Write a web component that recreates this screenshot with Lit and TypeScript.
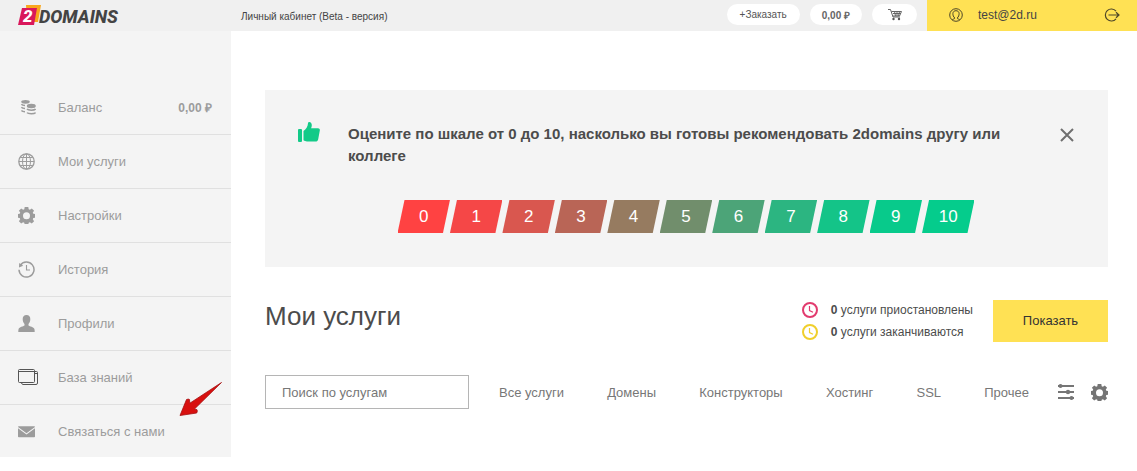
import { LitElement, html, css, svg } from "lit";
import { customElement } from "lit/decorators.js";

const gear = svg`<path fill-rule="evenodd" fill="currentColor" d="M6.700 0h3.600l.4 2.200 1.200.5 1.900-1.300 2.300 2.300-1.300 1.900.5 1.200 2 .3v3.600l-2 .4-.5 1.200 1.300 1.900-2.300 2.300-1.900-1.300-1.200.5-.4 2H6.700l-.4-2-1.200-.5-1.900 1.300-2.300-2.300 1.300-1.900-.5-1.200L0 10.700V7.100l1.700-.3.5-1.200L.9 3.700 3.200 1.400l1.900 1.300 1.200-.5zM8.500 5.200a3.500 3.500 0 1 0 0 7a3.500 3.500 0 1 0 0-7z"/>`;

const icons: Record<string, unknown> = {
  coins: svg`<g fill="currentColor"><ellipse cx="7.500" cy="2.800" rx="4.300" ry="1.900"/><ellipse cx="13.300" cy="7" rx="4.500" ry="2.200"/></g>
    <g fill="none" stroke="currentColor" stroke-width="1.500"><path d="M3.400 5.200c.8 1 2.200 1.200 3.600 1.200M3.400 8.200c.8 1 2.200 1.200 3.600 1.200M3.400 11.500c.8 1 2.200 1.200 3.600 1.200M9 10c1 1.500 7.600 1.500 8.600 0M9 13.600c1 1.500 7.600 1.500 8.600 0"/></g>`,
  globe: svg`<g fill="none" stroke="currentColor"><circle cx="8.500" cy="8.500" r="7.700" stroke-width="1.300"/><ellipse cx="8.500" cy="8.500" rx="4" ry="7.700"/><path d="M8.500 1v15M1 8.500h15M2.300 4.500h12.400M2.300 12.500h12.400"/></g>`,
  gear,
  history: svg`<g fill="none" stroke="currentColor"><path stroke-width="1.500" d="M2.200 4.500A7.500 7.500 0 1 1 1 8.800"/><path stroke-width="1.100" d="M8.500 4v5h3.500"/></g><path fill="currentColor" d="M1.200 2 5.200 4.800 1 6.600z"/>`,
  person: svg`<path fill="currentColor" d="M8.500 0c2.600 0 3.900 1.800 3.800 4.300 0 2-.8 3.600-1.800 4.700v1.600c1.200 1 5.200 1.400 5.900 3.400.3.900.3 1.900.3 3H.3c0-1.100 0-2.100.3-3 .7-2 4.700-2.400 5.900-3.400V9C5.500 7.900 4.700 6.300 4.700 4.300 4.600 1.800 5.900 0 8.500 0z"/>`,
  books: svg`<g fill="none" stroke="#555" stroke-width="1"><rect x=".5" y=".5" width="16" height="13" rx="1"/><path d="M.5 2.500h16"/><path d="M17 2.500h1.500q1 0 1 1V14q0 1.500-1.500 1.500H5q-1 0-1.500-1.500M17 4.500h2.500"/></g>`,
  mail: svg`<path fill="currentColor" d="M.8 3.200h15.400q.8 0 .8.800L8.500 10.200 0 4q0-.8.800-.8zM0 5.200l8.500 6.200L17 5.200v8.200q0 .8-.8.800H.8q-.8 0-.8-.8z"/>`,
  cart: svg`<g fill="none" stroke="#666" stroke-width="1"><path d="M1 1.500h2.500L6 9h7M4.500 3.500h10L12.500 8H5.700M6 5.500h8M7.500 3.500 8.500 8M10 3.500V8M12.500 3.500 11.500 8"/></g><g fill="#555"><circle cx="6.500" cy="11" r="1.200"/><circle cx="12" cy="11" r="1.200"/></g>`,
  user: svg`<g fill="none" stroke="#4d4628" stroke-width="1"><circle cx="7" cy="7" r="6.300"/><path d="M3.200 11.900c.5-.9 2.700-.9 2.600-1.900C4.300 8.700 3.900 7.300 3.900 5.600 3.900 3.900 5.200 2.700 7 2.700s3.100 1.200 3.100 2.900c0 1.700-.4 3.100-1.900 4.400-.1 1 2.100 1 2.600 1.900"/></g>`,
  exit: svg`<g fill="none" stroke="#4d4628" stroke-width="1.200"><path d="M12 3.200A6 6 0 1 0 12 10.800M4.500 7H15M12 4.200 15 7l-3 2.800"/></g>`,
  thumb: svg`<path fill="#13ca88" d="M1 7h2q1 0 1 1v11q0 1-1 1H1q-1 0-1-1V8q0-1 1-1zM5.500 9C8 7 9.900 4.500 10 1.200 10.200-.3 12-.3 13 .8c1.200 1.500.9 3.500.1 5.500H20c1.300 0 2.100 1 1.800 2.300L20.200 17.200c-.3 1.400-1.300 2.300-2.600 2.300H9c-1.400 0-2.500-.5-3.500-1.200z"/>`,
  close: svg`<path fill="none" stroke="#6f6f6f" stroke-width="2" d="M1 1 13 13M13 1 1 13"/>`,
  clock: svg`<circle cx="8" cy="8" r="7" fill="none" stroke="currentColor" stroke-width="2"/><path fill="none" stroke="currentColor" stroke-width="1.200" d="M7.500 4v4.500l3.500 1.700"/>`,
  sliders: svg`<g stroke="currentColor" stroke-width="2"><path d="M0 2h16M0 8h16M0 14h16"/></g><g fill="currentColor"><circle cx="2.500" cy="2" r="2"/><circle cx="10" cy="8" r="2.200"/><circle cx="13.500" cy="14" r="2"/></g>`,
};

const icon = (name: string, w: number, h: number) =>
  html`<svg width=${w} height=${h} viewBox="0 0 ${w} ${h}" aria-hidden="true">${icons[name]}</svg>`;

const shared = css`
  * { box-sizing: border-box; }
  button { font: inherit; color: inherit; border: 0; background: none; padding: 0; cursor: pointer; }
  a { color: inherit; text-decoration: none; }
  svg { display: block; flex: none; }
`;

@customElement("top-bar")
class TopBar extends LitElement {
  static styles = [shared, css`
    :host { display: flex; height: 31px; background: #f0f0f0; font-size: 10px; color: #555; }
    .logo { width: 241px; padding: 4px 0 0 18px; }
    .logo text { font-family: Roboto, sans-serif; font-style: italic; font-weight: 800; }
    .title { flex: 1; align-self: center; padding-top: 2px; color: #444; }
    .actions { display: flex; gap: 10px; padding: 4px 10px 0 0; }
    .pill { display: flex; align-items: center; justify-content: center; height: 21px; padding: 0 13px; border-radius: 11px; background: #fff; }
    .sum { padding: 0 12px; font-weight: 700; color: #666; }
    .cart { width: 45px; }
    .account { display: flex; align-items: center; width: 210px; padding: 0 17px 2px 22px; background: #ffe154; font-size: 12px; color: #444; }
    .mail { flex: 1; padding-left: 15px; }
  `];
  render() {
    return html`
      <a class="logo" href="#" aria-label="2domains">
        <svg width="102" height="22" viewBox="0 0 102 22">
          <path fill="#f9a61c" d="M8 1h15l-3 17H9z" />
          <path fill="#d9185b" d="M4 4h15l-3 17H0z" />
          <text x="5" y="18" font-size="17" fill="#fff">2</text>
          <text x="21" y="19" font-size="18" fill="#444">DOMAINS</text>
        </svg>
      </a>
      <span class="title">Личный кабинет (Beta - версия)</span>
      <div class="actions">
        <button class="pill">+Заказать</button>
        <button class="pill sum">0,00 ₽</button>
        <button class="pill cart" aria-label="Корзина">${icon("cart", 16, 13)}</button>
      </div>
      <div class="account">
        ${icon("user", 14, 14)}
        <a class="mail" href="#">test@2d.ru</a>
        <button aria-label="Выйти">${icon("exit", 16, 14)}</button>
      </div>`;
  }
}

@customElement("side-nav")
class SideNav extends LitElement {
  static styles = [shared, css`
    :host { display: block; padding-top: 50px; background: #f4f4f4; color: #9c9c9c; font-size: 13px; }
    .item { display: flex; align-items: center; height: 54px; padding: 0 19px 0 18px; border-bottom: 1px solid #e0e0e0; }
    .item:last-child { border: 0; height: 52px; }
    .icon { width: 40px; }
    .label { flex: 1; }
    .sum { font-weight: 700; font-size: 12px; }
  `];
  private items = [
    ["coins", "Баланс", "0,00 ₽"], ["globe", "Мои услуги"], ["gear", "Настройки"], ["history", "История"],
    ["person", "Профили"], ["books", "База знаний"], ["mail", "Связаться с нами"],
  ];
  render() {
    return html`<nav>${this.items.map(([ic, label, sum]) => html`
      <a class="item" href="#">
        <span class="icon">${icon(ic, ic === "books" ? 20 : ic === "coins" ? 18 : 17, 17)}</span>
        <span class="label">${label}</span>
        ${sum ? html`<span class="sum">${sum}</span>` : ""}
      </a>`)}</nav>`;
  }
}

@customElement("rating-panel")
class RatingPanel extends LitElement {
  static styles = [shared, css`
    :host { display: block; background: #f4f4f4; padding: 32px 34px 34px 33px; }
    .head { display: flex; align-items: flex-start; }
    .question { flex: 1; margin: 1px 40px 0 28px; font-size: 15px; line-height: 22px; font-weight: 700; color: #4c4c4c; }
    .close { margin-top: 6px; }
    .scale { display: grid; grid-template-columns: repeat(11, 1fr); max-width: 577px; margin: 33px auto 0; }
    .score { height: 33px; color: #fff; font-size: 17px; clip-path: polygon(7px 0, 100% 0, calc(100% - 7px) 100%, 0 100%); }
    .s0 { background: #ff4242; } .s1 { background: #f54747; } .s2 { background: #d9574f; }
    .s3 { background: #b96556; } .s4 { background: #967b60; } .s5 { background: #718e6c; }
    .s6 { background: #4ca478; } .s7 { background: #2cb581; } .s8 { background: #14c488; }
    .s9 { background: #08ca8b; } .s10 { background: #05cc8c; }
  `];
  render() {
    return html`
      <div class="head">
        ${icon("thumb", 22, 20)}
        <p class="question">Оцените по шкале от 0 до 10, насколько вы готовы рекомендовать 2domains другу или коллеге</p>
        <button class="close" aria-label="Закрыть">${icon("close", 14, 14)}</button>
      </div>
      <div class="scale">${Array.from({ length: 11 }, (_, i) => html`<button class="score s${i}">${i}</button>`)}</div>`;
  }
}

@customElement("services-section")
class ServicesSection extends LitElement {
  static styles = [shared, css`
    :host { display: block; }
    .top { display: flex; align-items: flex-start; }
    h1 { flex: 1; margin: 0; font-size: 26px; line-height: 32px; font-weight: 400; color: #4c4c4c; }
    .stats { display: grid; gap: 5px; margin: 2px 20px 0 0; font-size: 12px; line-height: 17px; color: #4c4c4c; }
    .stat { display: flex; gap: 13px; }
    .paused { color: #e23b6e; } .ending { color: #f0cf2c; }
    .show { width: 115px; height: 42px; padding-bottom: 2px; background: #ffe154; font-size: 13px; color: #333; }
    .filters { display: flex; align-items: center; margin-top: 33px; font-size: 13px; color: #777; }
    .search { width: 204px; height: 34px; padding: 0 16px; border: 1px solid #b5b5b5; border-radius: 0; background: #fff; font: inherit; color: #777; }
    .search::placeholder { color: #777; opacity: 1; }
    .tabs { display: flex; flex: 1; justify-content: space-between; margin: 0 29px 0 30px; }
    .tools { display: flex; gap: 17px; color: #757575; }
  `];
  render() {
    return html`
      <div class="top">
        <h1>Мои услуги</h1>
        <div class="stats">
          <div class="stat"><span class="paused">${icon("clock", 16, 16)}</span><span><b>0</b> услуги приостановлены</span></div>
          <div class="stat"><span class="ending">${icon("clock", 16, 16)}</span><span><b>0</b> услуги заканчиваются</span></div>
        </div>
        <button class="show">Показать</button>
      </div>
      <div class="filters">
        <input class="search" type="text" aria-label="Поиск по услугам" placeholder="Поиск по услугам" />
        <div class="tabs">${["Все услуги", "Домены", "Конструкторы", "Хостинг", "SSL", "Прочее"].map((t) => html`<a href="#">${t}</a>`)}</div>
        <div class="tools">
          <button aria-label="Фильтр">${icon("sliders", 16, 16)}</button>
          <button aria-label="Настройки">${icon("gear", 17, 17)}</button>
        </div>
      </div>`;
  }
}

@customElement("app-root")
class AppRoot extends LitElement {
  static styles = [shared, css`
    :host { display: block; background: #fff; font-family: "Liberation Sans", Arial, sans-serif; }
    .body { display: grid; grid-template-columns: 231px 1fr; align-items: start; }
    .side { position: relative; }
    .arrow { position: absolute; right: 8px; bottom: 40px; }
    main { padding: 59px 29px 0 34px; }
    services-section { margin-top: 33px; }
  `];
  render() {
    return html`
      <top-bar></top-bar>
      <div class="body">
        <div class="side">
          <side-nav></side-nav>
          <svg class="arrow" width="44" height="36" viewBox="0 0 44 36" aria-hidden="true">
            <path fill="#d8100f" stroke="#a50f10" stroke-width=".8" stroke-linejoin="round" d="M1 34.500 7.500 18.500q2-.8 3 0l.3 3.700L42.500 1.500 15.500 28l2.500.7q.8 1.300-.3 3.300z" />
          </svg>
        </div>
        <main>
          <rating-panel></rating-panel>
          <services-section></services-section>
        </main>
      </div>`;
  }
}
